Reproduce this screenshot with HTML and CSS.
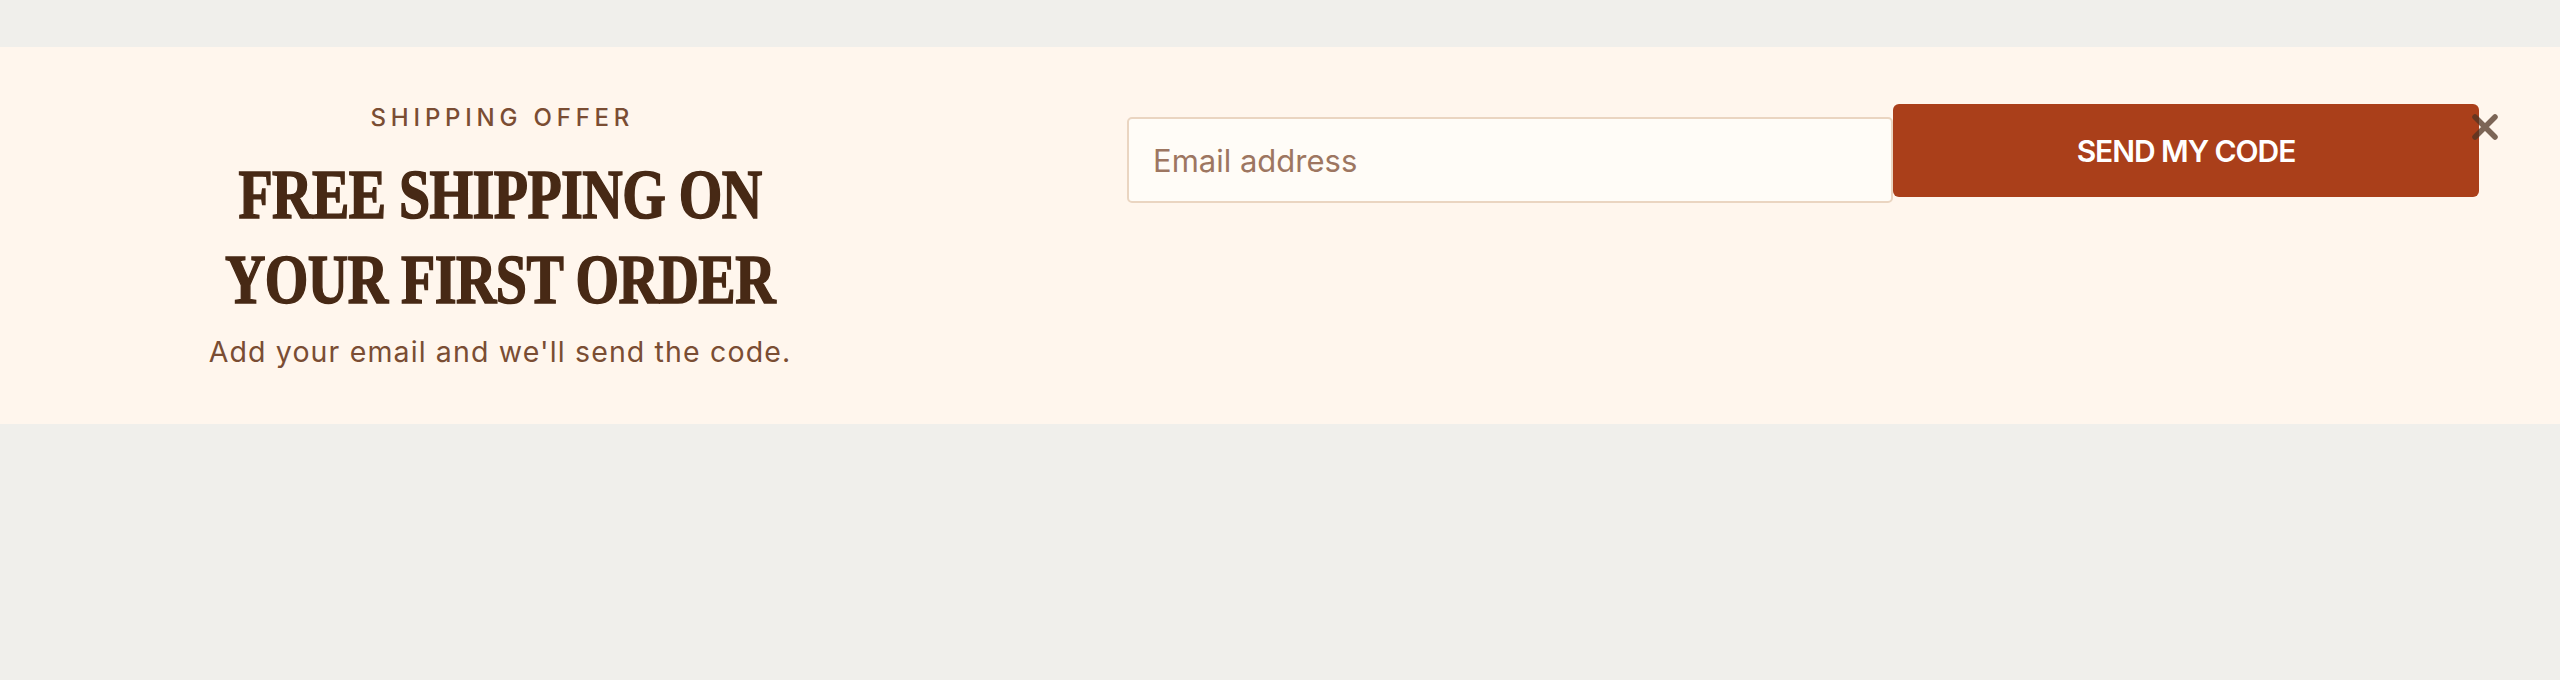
FILE: index.html
```html
<!DOCTYPE html>
<html lang="en">
<head>
<meta charset="utf-8">
<title>Shipping offer</title>
<link rel="stylesheet" href="styles.css">
</head>
<body>
<div class="top-space"></div>
<section class="banner">
  <div class="intro">
    <p class="eyebrow">SHIPPING OFFER</p>
    <h2 class="headline"><span>FREE SHIPPING ON</span><span>YOUR FIRST ORDER</span></h2>
    <p class="sub">Add your email and we'll send the code.</p>
  </div>
  <form class="signup">
    <input class="email" type="email" placeholder="Email address">
    <button class="send" type="button">SEND MY CODE</button>
  </form>
  <button class="close" type="button" aria-label="Close">
    <svg viewBox="0 0 30 30" width="30" height="30"><path d="M5 5 L25 25 M25 5 L5 25" fill="none" stroke="currentColor" stroke-width="5.5" stroke-linecap="round"/></svg>
  </button>
</section>
</body>
</html>
```
FILE: styles.css
```css
html, body {
  margin: 0;
  padding: 0;
  background: #f0efeb;
  height: 100%;
}
body {
  font-family: Inter, "Noto Sans", sans-serif;
}
.top-space {
  height: 47px;
}
.banner {
  position: relative;
  display: flex;
  align-items: flex-start;
  background: #fff6ed;
  height: 377px;
  box-sizing: border-box;
}
.intro {
  width: 1000px;
  padding-top: 56px;
  text-align: center;
}
.eyebrow {
  margin: 0;
  font-size: 24px;
  line-height: 30px;
  letter-spacing: 0.2em;
  font-weight: 500;
  color: #7a4d33;
  padding-left: 0.2em;
}
.headline {
  margin: 19px 0 0;
  font-family: "Liberation Serif", "Times New Roman", serif;
  font-weight: 700;
  font-size: 70px;
  line-height: 85px;
  color: #472915;
}
.headline span {
  display: block;
  transform: scaleX(0.8);
  letter-spacing: -0.01em;
  -webkit-text-stroke: 1.6px #472915;
}
.sub {
  margin: 12px 0 0;
  font-size: 28.5px;
  line-height: 36px;
  letter-spacing: 0.04em;
  color: #7a4d33;
}
.signup {
  display: flex;
  align-items: flex-start;
  margin: 57px 0 0 127px;
}
.email {
  width: 766px;
  height: 86px;
  margin-top: 13px;
  box-sizing: border-box;
  border: 2px solid #ead5c1;
  border-radius: 5px;
  background: #fffcf7;
  padding: 0 24px;
  font-family: Inter, "Noto Sans", sans-serif;
  font-size: 31px;
  color: #4a2c18;
  outline: none;
}
.email::placeholder {
  color: #9d7661;
}
.send {
  width: 586px;
  height: 93px;
  border: none;
  border-radius: 6px;
  background: #aa3f1a;
  color: #ffffff;
  font-family: Inter, "Noto Sans", sans-serif;
  font-size: 30px;
  font-weight: 600;
  letter-spacing: -0.035em;
  cursor: pointer;
}
.close {
  position: absolute;
  top: 65px;
  right: 60px;
  width: 30px;
  height: 30px;
  padding: 0;
  border: none;
  background: transparent;
  color: rgba(80, 52, 35, 0.75);
  cursor: pointer;
}
.close svg {
  display: block;
}
```
